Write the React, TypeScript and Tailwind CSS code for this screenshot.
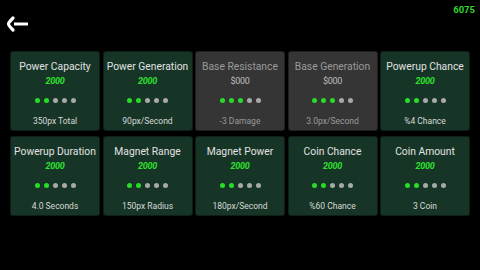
import React from "react";

type Upgrade = {
    title: string;
    price: string;
    level: number;
    info: string;
    locked?: boolean;
};

const upgrades: Upgrade[] = [
    { title: "Power Capacity", price: "2000", level: 2, info: "350px Total" },
    { title: "Power Generation", price: "2000", level: 2, info: "90px/Second" },
    { title: "Base Resistance", price: "$000", level: 3, info: "-3 Damage", locked: true },
    { title: "Base Generation", price: "$000", level: 3, info: "3.0px/Second", locked: true },
    { title: "Powerup Chance", price: "2000", level: 2, info: "%4 Chance" },
    { title: "Powerup Duration", price: "2000", level: 2, info: "4.0 Seconds" },
    { title: "Magnet Range", price: "2000", level: 2, info: "150px Radius" },
    { title: "Magnet Power", price: "2000", level: 2, info: "180px/Second" },
    { title: "Coin Chance", price: "2000", level: 2, info: "%60 Chance" },
    { title: "Coin Amount", price: "2000", level: 2, info: "3 Coin" },
];

function Card({ item }: { item: Upgrade }) {
    return (
        <div
            className={`h-[80px] rounded-[3px] border border-black/40 flex flex-col items-center pt-[8px] ${
                item.locked ? "bg-[#353535]" : "bg-[#163526]"
            }`}
        >
            <p
                className={`text-[10.3px] leading-[13px] whitespace-nowrap ${
                    item.locked ? "text-[#9a9a9a]" : "text-[#e2e2e2]"
                }`}
            >
                {item.title}
            </p>
            <p
                className={`mt-[3px] text-[9px] leading-[11px] tracking-[-0.3px] ${
                    item.locked ? "text-[#bdbdbd]" : "text-[#2ee02e] font-bold italic"
                }`}
            >
                {item.price}
            </p>
            <div className="mt-[11px] flex gap-[4px]">
                {[0, 1, 2, 3, 4].map((i) => (
                    <span
                        key={i}
                        className={`block w-[5px] h-[5px] rounded-full ${
                            i < item.level ? "bg-[#27dd27]" : "bg-[#a9a9a9]"
                        }`}
                    />
                ))}
            </div>
            <p
                className={`mt-[13px] text-[8.5px] leading-[10px] whitespace-nowrap ${
                    item.locked ? "text-[#9a9a9a]" : "text-[#d8d8d8]"
                }`}
            >
                {item.info}
            </p>
        </div>
    );
}

export default function App() {
    return (
        <div className="w-[480px] h-[270px] bg-black overflow-hidden" style={{ fontFamily: "Roboto, 'Noto Sans', sans-serif" }}>
            <div className="h-[51px] flex justify-between items-start">
                <svg className="mt-[14px] ml-[5px]" width="26" height="20" viewBox="0 0 26 20">
                    <path
                        d="M8 4 Q3 9 3.5 10 Q3 11 8 16"
                        fill="none"
                        stroke="#ffffff"
                        strokeWidth="3.2"
                        strokeLinecap="round"
                        strokeLinejoin="round"
                    />
                    <path d="M9 10 L23 10" stroke="#ffffff" strokeWidth="3" />
                </svg>
                <span className="mt-[5px] mr-[5px] text-[9.5px] leading-[10px] font-bold text-[#2ad62a]">6075</span>
            </div>
            <div className="ml-[10px] w-[460px] grid grid-cols-5 gap-x-[2.5px] gap-y-[5px]">
                {upgrades.map((u) => (
                    <Card key={u.title} item={u} />
                ))}
            </div>
        </div>
    );
}
